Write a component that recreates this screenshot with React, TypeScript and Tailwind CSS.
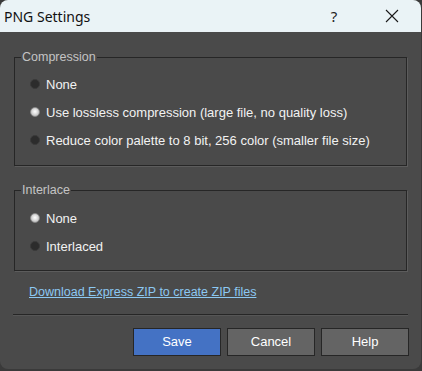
import React from "react";

function Radio({ checked }: { checked?: boolean }) {
  return checked ? (
    <span className="w-[10px] h-[10px] rounded-full bg-[radial-gradient(circle_at_50%_45%,#ffffff_0%,#e4e4e4_35%,#a8a8a8_100%)] border border-[#8a8a8a] shrink-0" />
  ) : (
    <span className="w-[10px] h-[10px] rounded-full bg-[#2c2c2c] border border-[#3a3a3a] shrink-0" />
  );
}

function Option({ label, checked }: { label: string; checked?: boolean }) {
  return (
    <div className="h-[28px] flex items-center pl-[15px] gap-[6px]">
      <Radio checked={checked} />
      <span className="text-[#f2f2f2] text-[13px] leading-[15px]">{label}</span>
    </div>
  );
}

function Group({ title, children, className }: { title: string; children: React.ReactNode; className?: string }) {
  return (
    <fieldset className={"mx-[14px] border border-[#262626] shadow-[1px_1px_0_#5c5c5c] " + (className ?? "")}>
      <legend className="ml-[6px] px-[1px] text-[#c4c4c4] text-[12.5px] leading-[14px]">{title}</legend>
      {children}
    </fieldset>
  );
}

export default function App() {
  return (
    <div className="w-[422px] h-[371px] bg-[#3a3a3a] overflow-hidden" style={{ fontFamily: '"Liberation Sans", Arial, sans-serif' }}>
      <div className="w-[421px] h-[369px] rounded-[8px] bg-[#4a4a4a] flex flex-col overflow-hidden">
        <div className="h-[32px] bg-[#eaf3f6] flex items-center shrink-0">
          <span className="ml-[4px] text-[14px] text-[#111] flex-1" style={{ fontFamily: '"Noto Sans", sans-serif' }}>PNG Settings</span>
          <span className="w-[46px] text-center text-[15px] text-[#222] mr-[12px]" style={{ fontFamily: '"Noto Sans", sans-serif' }}>?</span>
          <span className="w-[46px] flex justify-center mr-[6px]">
            <svg width="14" height="14" viewBox="0 0 14 14">
              <path d="M1 1L13 13M13 1L1 13" stroke="#1a1a1a" strokeWidth="1.1" />
            </svg>
          </span>
        </div>
        <div className="flex flex-col">
          <Group title="Compression" className="mt-[18px] pt-[6px] pb-[11px]">
            <Option label="None" />
            <Option label="Use lossless compression (large file, no quality loss)" checked />
            <Option label="Reduce color palette to 8 bit, 256 color (smaller file size)" />
          </Group>
          <Group title="Interlace" className="mt-[17px] pt-[7px] pb-[10px]">
            <Option label="None" checked />
            <Option label="Interlaced" />
          </Group>
          <div className="mt-[8px] ml-[29px] h-[14px]">
            <span className="text-[12.5px] leading-[14px] text-[#8cc8f2] underline">Download Express ZIP to create ZIP files</span>
          </div>
          <div className="mt-[21px] mx-[13px] h-[1px] bg-[#262626] shadow-[0_1px_0_#565656]" />
          <div className="mt-[13px] flex justify-end gap-[6px] pr-[12px]">
            <button className="w-[88px] h-[28px] bg-[#4472c4] border border-[#262626] text-white text-[13px]">Save</button>
            <button className="w-[88px] h-[28px] bg-[#646464] border border-[#262626] text-white text-[13px]">Cancel</button>
            <button className="w-[88px] h-[28px] bg-[#646464] border border-[#262626] text-white text-[13px]">Help</button>
          </div>
        </div>
      </div>
    </div>
  );
}
